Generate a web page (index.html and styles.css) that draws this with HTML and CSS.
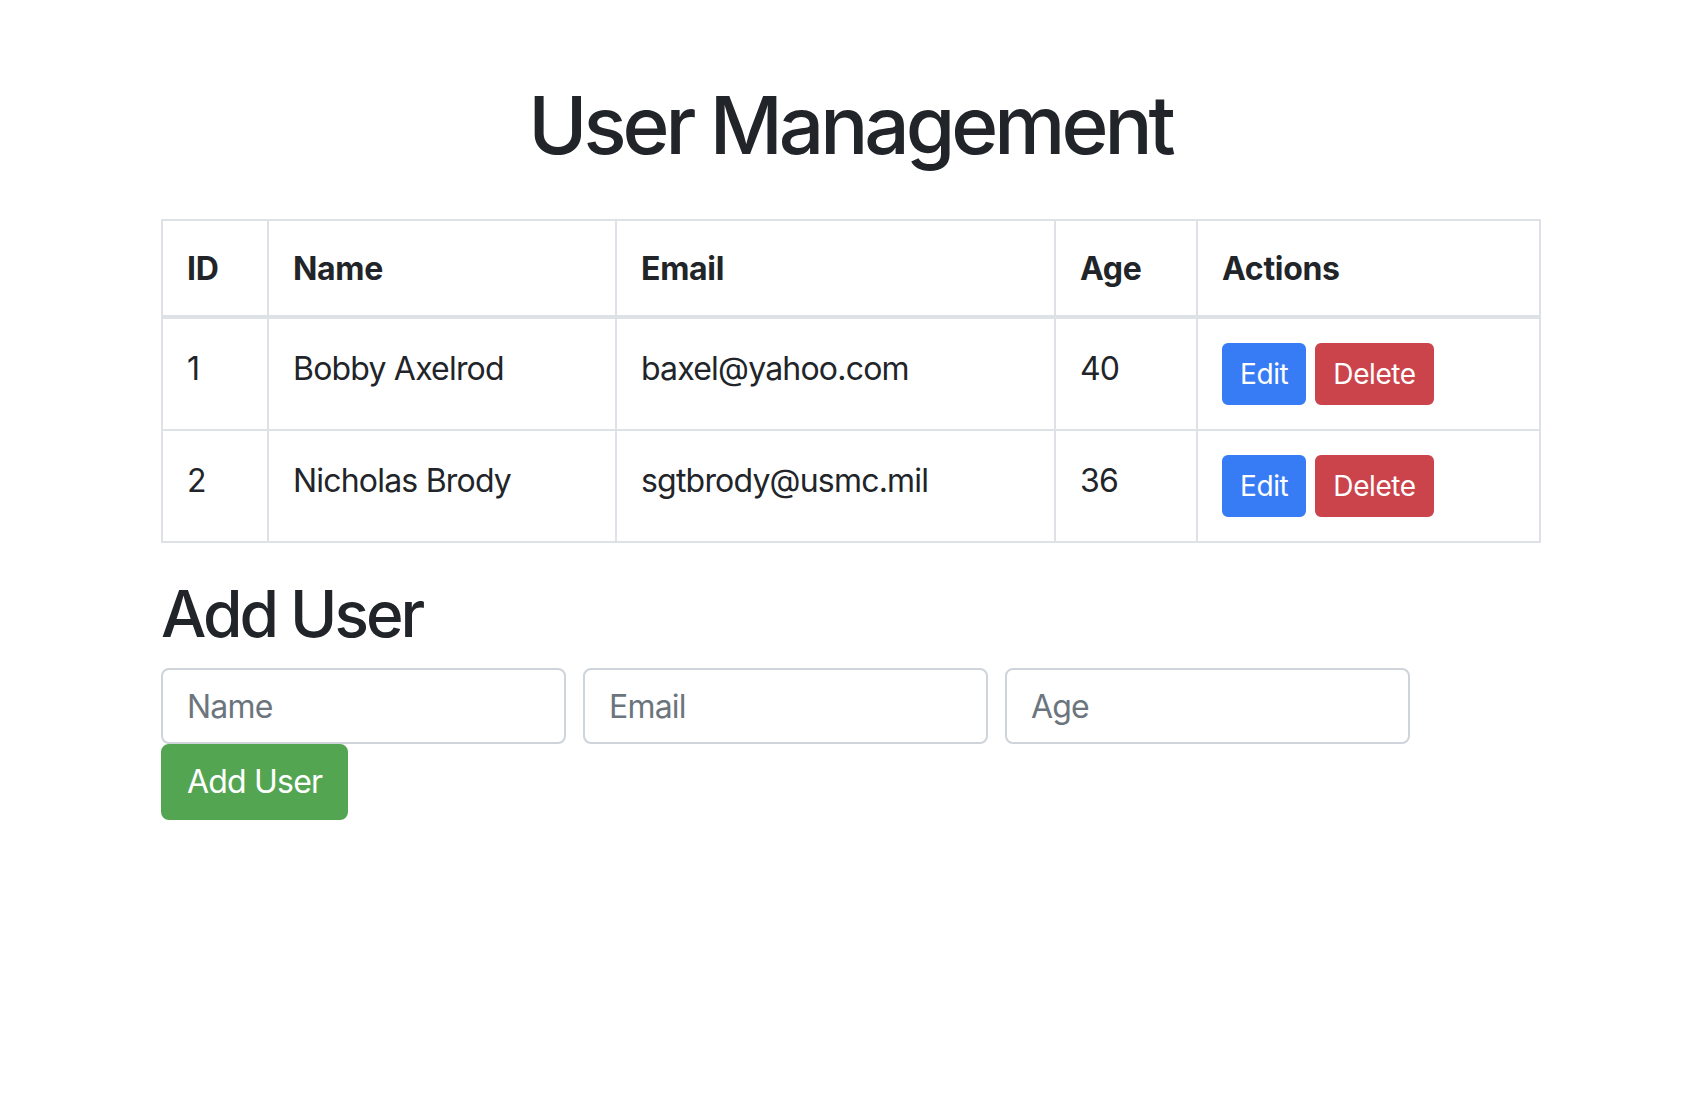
FILE: index.html
```html
<!DOCTYPE html>
<html lang="en">
<head>
<meta charset="utf-8">
<title>User Management</title>
<link rel="stylesheet" href="styles.css">
</head>
<body>
<div class="page">
  <h1 class="title">User Management</h1>
  <table class="users">
    <colgroup>
      <col class="col-id">
      <col class="col-name">
      <col class="col-email">
      <col class="col-age">
      <col class="col-actions">
    </colgroup>
    <thead>
      <tr>
        <th>ID</th>
        <th>Name</th>
        <th>Email</th>
        <th>Age</th>
        <th>Actions</th>
      </tr>
    </thead>
    <tbody>
      <tr>
        <td>1</td>
        <td>Bobby Axelrod</td>
        <td>baxel@yahoo.com</td>
        <td>40</td>
        <td class="actions-cell"><div class="actions"><button class="btn btn-sm btn-primary">Edit</button><button class="btn btn-sm btn-danger">Delete</button></div></td>
      </tr>
      <tr>
        <td>2</td>
        <td>Nicholas Brody</td>
        <td>sgtbrody@usmc.mil</td>
        <td>36</td>
        <td class="actions-cell"><div class="actions"><button class="btn btn-sm btn-primary">Edit</button><button class="btn btn-sm btn-danger">Delete</button></div></td>
      </tr>
    </tbody>
  </table>
  <h2 class="section-title">Add User</h2>
  <form class="add-form">
    <input class="field" type="text" placeholder="Name">
    <input class="field" type="email" placeholder="Email">
    <input class="field" type="number" placeholder="Age">
    <button class="btn btn-success" type="button">Add User</button>
  </form>
</div>
</body>
</html>
```

FILE: styles.css
```css
* {
  box-sizing: border-box;
}

html, body {
  margin: 0;
  padding: 0;
  background: #ffffff;
}

body {
  font-family: Inter, "Liberation Sans", sans-serif;
  font-size: 32px;
  line-height: 48px;
  color: #212529;
  letter-spacing: -0.8px;
}

.page {
  width: 1682px;
  padding: 77px 143px 0 161px;
}

.title {
  margin: 0 0 46px 0;
  font-size: 80px;
  line-height: 96px;
  font-weight: 500;
  text-align: center;
  letter-spacing: -4px;
}

.users {
  width: 1378px;
  table-layout: fixed;
  border-collapse: collapse;
  margin-bottom: 32px;
}

.col-id { width: 106px; }
.col-name { width: 348px; }
.col-email { width: 439px; }
.col-age { width: 142px; }
.col-actions { width: 343px; }

.users th,
.users td {
  border: 2px solid #dee2e6;
  padding: 24px 24px 22px 24px;
  text-align: left;
  vertical-align: top;
  white-space: nowrap;
}

.users th {
  font-weight: 700;
  letter-spacing: -0.3px;
}

.users thead th {
  border-bottom-width: 4px;
}

.users td {
  padding-top: 26px;
}

.users td.actions-cell {
  padding-top: 24px;
  padding-bottom: 24px;
}

.actions {
  display: flex;
  gap: 9px;
}

.btn {
  font-family: Inter, "Liberation Sans", sans-serif;
  display: inline-block;
  border: 2px solid transparent;
  color: #ffffff;
  font-size: 32px;
  line-height: 48px;
  padding: 12px 24px;
  border-radius: 8px;
  font-weight: 400;
  letter-spacing: -0.8px;
  cursor: pointer;
}

.btn-sm {
  font-size: 28px;
  line-height: 42px;
  padding: 8px 16px;
  border-radius: 6px;
  letter-spacing: -0.4px;
}

.btn-primary {
  background: #387cf5;
  border-color: #387cf5;
}

.btn-danger {
  background: #cb444b;
  border-color: #cb444b;
}

.btn-success {
  background: #54a552;
  border-color: #54a552;
}

.section-title {
  margin: 0 0 16px 0;
  font-size: 64px;
  line-height: 77px;
  font-weight: 500;
  letter-spacing: -3px;
}

.add-form {
  display: flex;
  flex-wrap: wrap;
  column-gap: 17px;
  row-gap: 0;
  width: 1378px;
}

.field {
  width: 405px;
  height: 76px;
  padding: 12px 24px;
  border: 2px solid #ced4da;
  border-radius: 8px;
  font-family: Inter, "Liberation Sans", sans-serif;
  font-size: 32px;
  line-height: 48px;
  letter-spacing: -0.8px;
  color: #495057;
  background: #ffffff;
}

.field::placeholder {
  color: #6c757d;
}

.add-form .btn {
  height: 76px;
}
```
